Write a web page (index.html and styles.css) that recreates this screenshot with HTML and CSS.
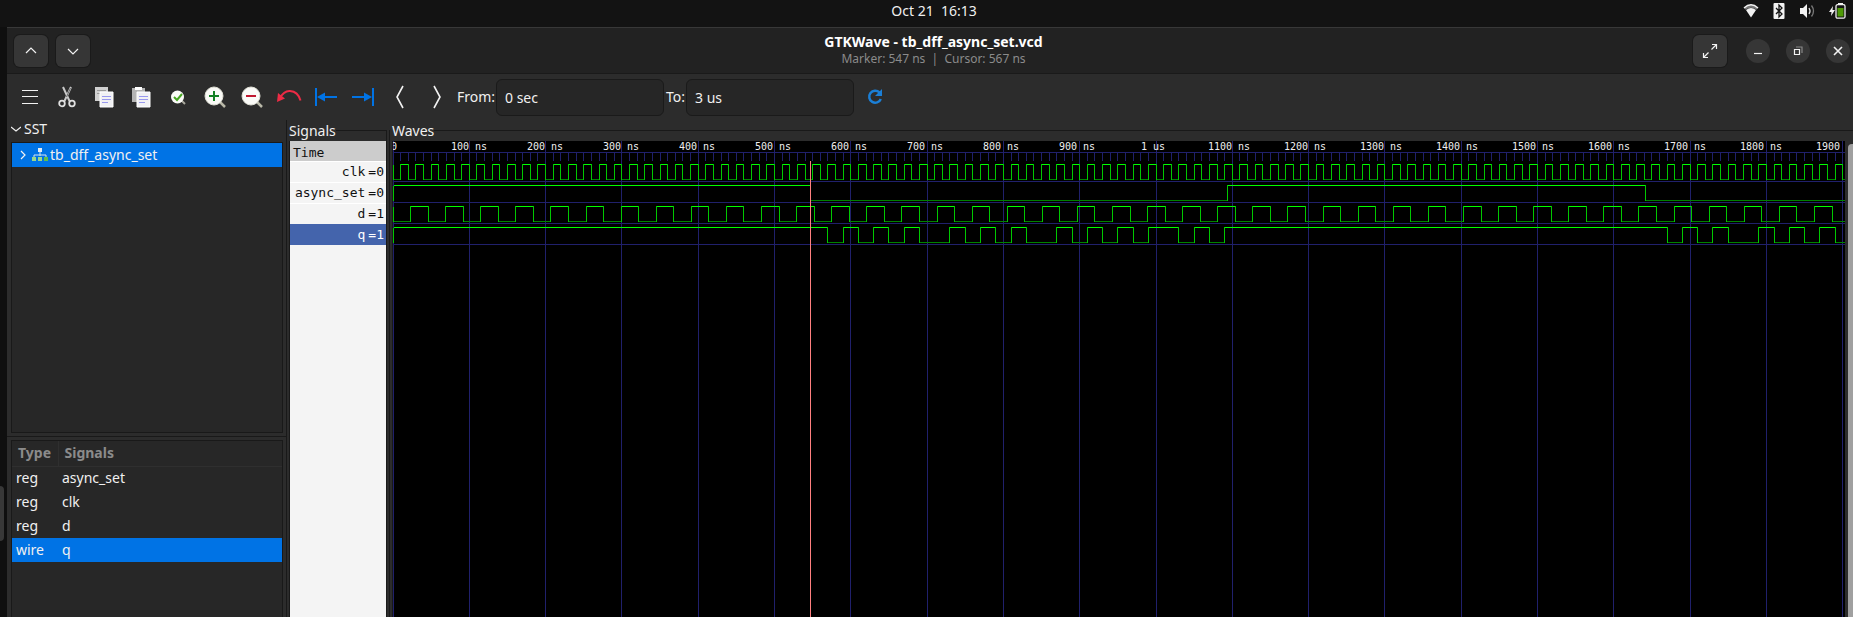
FILE: index.html
```html
<!DOCTYPE html>
<html lang="en">
<head>
<meta charset="utf-8">
<title>GTKWave - tb_dff_async_set.vcd</title>
<link rel="stylesheet" href="styles.css">
</head>
<body>
<header class="topbar">
  <time class="clock">Oct 21&nbsp; 16:13</time>
  <div class="tray">
    <svg width="16" height="16" viewBox="0 0 16 16" role="img" aria-label="Wi-Fi"><path d="M1 5Q8-1.500 15 5L13.500 6.800Q8 2.500 2.500 6.800Z" fill="#777"/><path d="M1 5Q8-1.500 15 5" fill="none" stroke="#f2f2f2" stroke-width="1.500"/><path d="M3 7Q8 3.200 13 7L8 14.500Z" fill="#f2f2f2"/></svg>
    <svg width="12" height="16" viewBox="0 0 12 16" role="img" aria-label="Bluetooth"><rect x=".5" width="11" height="16" rx="1" fill="#f2f2f2"/><path d="M3 5l6 6-3 3V2l3 3-6 6" fill="none" stroke="#131313" stroke-width="1.300"/></svg>
    <svg width="16" height="16" viewBox="0 0 16 16" role="img" aria-label="Volume"><path d="M1 5h3l4-4v14l-4-4H1z" fill="#f2f2f2"/><path d="M10 5q2 3 0 6" fill="none" stroke="#ddd" stroke-width="1.300"/><path d="M12.500 2.500q4 5.500 0 11" fill="none" stroke="#777" stroke-width="1.300"/></svg>
    <svg width="17" height="16" viewBox="0 0 17 16" role="img" aria-label="Battery charging"><path d="M4 3L0 9h2.500L2 13l4-6H3.500z" fill="#f2f2f2"/><path d="M9 0h5v2H9z" fill="#f2f2f2"/><rect x="7" y="1.700" width="9" height="13.500" rx="1.500" fill="#131313" stroke="#f2f2f2" stroke-width="1.300"/><rect x="8.500" y="5" width="6" height="8.500" fill="#4e9a06"/></svg>
  </div>
</header>

<div class="screen">
  <aside class="dock"><span class="dock-handle"></span></aside>
  <main class="window">
    <header class="titlebar">
      <div class="group">
        <button class="square" aria-label="Previous"><svg width="12" height="12" viewBox="0 0 12 12"><path d="M1 8l5-5 5 5" class="line"/></svg></button>
        <button class="square" aria-label="Next"><svg width="12" height="12" viewBox="0 0 12 12"><path d="M1 4l5 5 5-5" class="line"/></svg></button>
      </div>
      <div class="heading">
        <h1>GTKWave - tb_dff_async_set.vcd</h1>
        <p>Marker: 547 ns&nbsp; |&nbsp; Cursor: 567 ns</p>
      </div>
      <div class="group controls">
        <button class="square" aria-label="Full screen"><svg width="16" height="16" viewBox="0 0 16 16"><path d="M9.500 6.500l5-5M10 1.500h4.500V6M6.500 9.500l-5 5M6 14.500H1.500V10" class="line"/></svg></button>
        <button class="round" aria-label="Minimize"><svg width="10" height="10" viewBox="0 0 10 10"><path d="M1 7.500h8" class="line"/></svg></button>
        <button class="round" aria-label="Restore"><svg width="10" height="10" viewBox="0 0 10 10"><path d="M3 1h6v6" class="line faint"/><path d="M1.500 3.500h5v5h-5z" class="line"/></svg></button>
        <button class="round" aria-label="Close"><svg width="10" height="10" viewBox="0 0 10 10"><path d="M1 1l8 8M9 1L1 9" class="line bold"/></svg></button>
      </div>
    </header>

    <div class="toolbar">
      <button class="tool" aria-label="Menu"><svg width="22" height="22" viewBox="0 0 22 22"><path d="M3 4.500h16M3 10.500h16M3 17.500h16" class="line"/></svg></button>
      <button class="tool" aria-label="Cut"><svg width="22" height="22" viewBox="0 0 22 22"><path d="M7 1l6.500 14M15 1L8.500 15" fill="none" stroke="#c8c8c8" stroke-width="2"/><path d="M14.500 2l-4 9" stroke="#666"/><circle cx="6" cy="17.500" r="2.800" fill="none" stroke="#e0e0e0" stroke-width="1.800"/><circle cx="16" cy="17.500" r="2.800" fill="none" stroke="#e0e0e0" stroke-width="1.800"/></svg></button>
      <button class="tool" aria-label="Copy"><svg width="22" height="22" viewBox="0 0 22 22"><path d="M2 1h13v14H2z" fill="#d0d0d0"/><path d="M4 4.500h9M4 7.500h9" stroke="#999"/><path d="M7 6h13v15H7z" fill="#f1f1f4" stroke="#fff"/><path d="M9 10.500h9M9 13.500h9M9 16.500h6" stroke="#9898ee"/></svg></button>
      <button class="tool" aria-label="Paste"><svg width="22" height="22" viewBox="0 0 22 22"><path d="M2 2h13v14H2z" fill="#b4b4b4"/><path d="M5 1h7v3H5z" fill="#fff"/><path d="M7 6h13v15H7z" fill="#f1f1f4" stroke="#fff"/><path d="M9 10.500h9M9 13.500h9M9 16.500h6" stroke="#9898ee"/></svg></button>
      <button class="tool" aria-label="Zoom fit"><svg width="22" height="22" viewBox="0 0 22 22"><path d="M14 14l4 4" stroke="#aaa99e" stroke-width="2"/><circle cx="10.500" cy="11" r="6.500" fill="#fafaf7"/><path d="M7 11l3 3 5-6" fill="none" stroke="#45a520" stroke-width="2"/></svg></button>
      <button class="tool" aria-label="Zoom in"><svg width="22" height="22" viewBox="0 0 22 22"><path d="M15 15l6 6" stroke="#b9b8a8" stroke-width="2.500"/><circle cx="10" cy="10" r="9" fill="#fafaf7" stroke="#deded4"/><path d="M10 5v10M5 10h10" stroke="#128023" stroke-width="2"/></svg></button>
      <button class="tool" aria-label="Zoom out"><svg width="22" height="22" viewBox="0 0 22 22"><path d="M15 15l6 6" stroke="#b9b8a8" stroke-width="2.500"/><circle cx="10" cy="10" r="9" fill="#fafaf7" stroke="#deded4"/><path d="M5 10h10" stroke="#c01830" stroke-width="2"/></svg></button>
      <button class="tool" aria-label="Undo zoom"><svg width="26" height="22" viewBox="0 0 26 22"><path d="M4 12Q8 4.500 14 5q8 .5 10.500 9.500" fill="none" stroke="#ed2b45" stroke-width="2"/><path d="M2 7l7 5.500-8 3.500z" fill="#ed2b45"/></svg></button>
      <button class="tool" aria-label="Zoom to start"><svg width="22" height="22" viewBox="0 0 22 22"><path d="M1 2v18M8 11h14" stroke="#0073e5" stroke-width="2"/><path d="M2 11l8-4.500v9z" fill="#0073e5"/></svg></button>
      <button class="tool" aria-label="Zoom to end"><svg width="22" height="22" viewBox="0 0 22 22"><path d="M21 2v18M0 11h14" stroke="#0073e5" stroke-width="2"/><path d="M20 11l-8-4.500v9z" fill="#0073e5"/></svg></button>
      <button class="tool" aria-label="Previous edge"><svg width="22" height="24" viewBox="0 0 22 24"><path d="M14 1L8 12l6 11" class="line bold"/></svg></button>
      <button class="tool" aria-label="Next edge"><svg width="22" height="24" viewBox="0 0 22 24"><path d="M8 1l6 11-6 11" class="line bold"/></svg></button>
      <label class="field"><span class="from">From:</span><input type="text" value="0 sec"></label>
      <label class="field"><span>To:</span><input type="text" value="3 us"></label>
      <button class="tool" aria-label="Reload"><svg width="18" height="18" viewBox="0 0 18 18"><path d="M13.500 4.500A6 6 0 1 0 14.800 11" fill="none" stroke="#1b7fd6" stroke-width="2.500"/><path d="M16 1v7H9z" fill="#1b7fd6"/></svg></button>
    </div>

    <div class="panes">
      <section class="tree-pane">
        <button class="expander"><svg width="10" height="10" viewBox="0 0 10 10"><path d="M0 3l5 4 5-4" class="line"/></svg>SST</button>
        <div class="box tree">
          <button class="node">
            <svg width="6" height="10" viewBox="0 0 6 10"><path d="M1 1l4 4-4 4" class="line"/></svg>
            <svg width="16" height="14" viewBox="0 0 16 14"><path d="M8 4v4M2 9V7h12v2" fill="none" stroke="#d5e4f4"/><path d="M6 0h4v4H6z" fill="#e2ebf5"/><path d="M0 9h4v4H0zM6 9h4v4H6z" fill="#9bd78b"/><path d="M12 9h4v4h-4z" fill="#5fbd4c"/></svg>
            <span>tb_dff_async_set</span>
          </button>
        </div>
        <div class="split"></div>
        <div class="box">
          <table class="vars">
            <thead><tr><th class="type">Type</th><th>Signals</th></tr></thead>
            <tbody>
              <tr><td>reg</td><td>async_set</td></tr>
              <tr><td>reg</td><td>clk</td></tr>
              <tr><td>reg</td><td>d</td></tr>
              <tr class="selected"><td>wire</td><td>q</td></tr>
            </tbody>
          </table>
        </div>
      </section>

      <fieldset class="frame signals">
        <legend>Signals</legend>
        <ul class="names">
          <li class="head">Time</li>
          <li>clk<span>=0</span></li>
          <li>async_set<span>=0</span></li>
          <li>d<span>=1</span></li>
          <li class="active">q<span>=1</span></li>
        </ul>
      </fieldset>

      <fieldset class="frame waves">
        <legend>Waves</legend>
        <div class="wave-body">
          <svg class="canvas" id="waves" role="img" aria-label="Waveforms of clk, async_set, d and q"></svg>
          <div class="scroll"><span class="thumb"></span></div>
        </div>
      </fieldset>
    </div>
  </main>
</div>
<script src="waves.js"></script>
</body>
</html>
```
FILE: styles.css
```css
* { box-sizing: border-box; }

body {
  margin: 0;
  height: 100vh;
  display: flex;
  flex-direction: column;
  overflow: hidden;
  background: #131313;
  color: #f0f0f0;
  font: 14px/20px "Noto Sans", sans-serif;
}

button {
  display: flex;
  align-items: center;
  justify-content: center;
  padding: 0;
  border: 0;
  background: none;
  color: inherit;
  font: inherit;
}

svg { display: block; flex: none; }

.line { fill: none; stroke: #f2f2f2; stroke-width: 1.2; }
.line.bold { stroke-width: 1.6; }
.line.faint { stroke: #888; }

.topbar {
  display: grid;
  grid-template-columns: 1fr auto 1fr;
  align-items: center;
  height: 27px;
  padding: 0 7px 6px 22px;
  flex: none;
}
.clock { grid-column: 2; }
.tray { display: flex; justify-content: flex-end; gap: 14px; }

.screen { display: flex; flex: 1; min-height: 0; }

.dock { width: 7px; display: flex; align-items: flex-end; padding-bottom: 76px; background: #0f0f0f; }
.dock-handle { width: 4px; height: 55px; border-radius: 0 4px 4px 0; background: #383838; }

.window { flex: 1; min-width: 0; display: flex; flex-direction: column; background: #2c2c2c; }

.titlebar {
  display: grid;
  grid-template-columns: 1fr auto 1fr;
  align-items: center;
  height: 47px;
  flex: none;
  padding: 0 0 0 7px;
  background: #222;
  border-top: 1px solid #383838;
  border-bottom: 1px solid #1a1a1a;
}
.group { display: flex; align-items: center; gap: 8px; }
.controls { justify-content: flex-end; gap: 16px; padding-right: 3px; }
.controls .square { margin-right: 3px; }
.square { width: 34px; height: 32px; border-radius: 6px; background: #363636; box-shadow: 0 0 0 1px #1a1a1a; }
.round { width: 24px; height: 24px; border-radius: 50%; background: #363636; }
.heading { padding-bottom: 1px; text-align: center; }
.heading h1 { margin: 0; font-size: 14px; line-height: 16px; color: #fff; }
.heading p { margin: 0; font-size: 12px; line-height: 17px; color: #8b8b8b; }

.toolbar { display: flex; align-items: center; height: 46px; flex: none; padding-left: 4px; }
.tool { width: 37px; height: 36px; }
.field { display: flex; align-items: center; }
.field span { width: 20px; }
.field .from { width: 41px; padding-left: 2px; }
.field input {
  width: 168px;
  height: 37px;
  margin-right: 2px;
  padding: 0 8px;
  border: 1px solid #1a1a1a;
  border-radius: 6px;
  background: #262626;
  color: inherit;
  font: inherit;
}

.panes { display: flex; flex: 1; min-height: 0; }

.tree-pane { width: 280px; flex: none; display: flex; flex-direction: column; border-right: 1px solid #191919; }
.expander { justify-content: flex-start; gap: 3px; height: 18px; margin: 0 0 4px 4px; }
.box { margin: 0 3px 0 4px; border: 1px solid #191919; background: #272727; }
.box:last-child { flex: 1; border-bottom: 0; }
.tree { height: 291px; flex: none; }
.node { width: 100%; height: 24px; justify-content: flex-start; gap: 6px; padding-left: 8px; background: #0073e5; }
.node span { margin-left: -4px; }
.split { height: 1px; margin: 3px 0; background: #191919; flex: none; }

.vars { width: 100%; border-collapse: collapse; }
.vars th, .vars td { height: 24px; padding: 0 4px; text-align: left; }
.vars th { height: 25px; padding: 0 6px; color: #8b8b8b; border-bottom: 1px solid #2f2f2f; }
.vars .type { width: 46px; border-right: 1px solid #2f2f2f; }
.vars .selected { background: #0073e5; }

.frame { position: relative; margin: 0; padding: 0; border: 1px solid #191919; border-bottom: 0; display: flex; flex-direction: column; min-width: 0; }
.frame legend { padding: 0; margin-left: -1px; line-height: 21px; }
.signals { width: 98px; flex: none; margin: 0 2px; }
.waves { flex: 1; margin: 0 0 0 3px; border-right: 0; }
.waves::before {
  content: "";
  position: absolute;
  left: -4px;
  top: -11px;
  bottom: 0;
  width: 1px;
  background: #191919;
}

.names {
  flex: 1;
  min-height: 476px;
  margin: 0;
  padding: 0;
  list-style: none;
  background: #f4f4f4;
  color: #111;
  font: 13px/20px "DejaVu Sans Mono", monospace;
  text-align: right;
}
.names li { height: 21px; padding: 0 2px; border-top: 1px solid #fff; }
.names span { margin-left: 3px; }
.names .head { height: 20px; line-height: 24px; border: 0; background: #ccc; text-align: left; padding-left: 3px; }
.names .active { background: #4464ac; border-color: #4464ac; color: #fff; }

.wave-body { display: flex; flex: 1; min-height: 476px; }
.canvas { flex: 1; min-width: 0; background: #000; shape-rendering: crispEdges; }
.canvas path { fill: none; stroke-width: 1; }
.canvas text { fill: #f0f0f0; font: 10px "DejaVu Sans Mono", monospace; text-anchor: middle; }
.grid { stroke: #20206c; }
.high { stroke: #00ff00; }
.edge { stroke: #00c800; }
.low { stroke: #008200; }
.marker { stroke: #ff8080; }
.scroll { width: 8px; flex: none; padding: 3px 0 0 3px; background: #2c2c2c; }
.thumb { display: block; height: 100%; border-radius: 4px 0 0 0; background: #a0a0a0; }
```
FILE: waves.js
```js
const END = 3000;
const SCALE = 0.763;
const LABEL_SCALE = 0.76;
const MARKER = 547;
const svg = document.getElementById("waves");
const width = svg.getBoundingClientRect().width;

function add(tag, attrs, text) {
  const el = document.createElementNS("http://www.w3.org/2000/svg", tag);
  for (const key in attrs) el.setAttribute(key, attrs[key]);
  if (text) el.textContent = text;
  svg.appendChild(el);
}

const col = (t) => Math.floor(t * SCALE) + 0.5;

let grid = "M0 11.5H3000";
for (let t = 0; t <= END; t += 10) {
  grid += t % 100 ? `M${col(t)} 11V20` : `M${col(t)} 0V3000`;
}
for (let row = 0; row < 4; row++) grid += `M0 ${40.5 + row * 21}H3000`;
add("path", { class: "grid", d: grid });

for (let t = 0; t <= END && t * LABEL_SCALE < width; t += 100) {
  const label = t === 0 ? "0" : t % 1000 ? `${t} ns` : `${t / 1000} us`;
  add("text", { x: Math.round(t * LABEL_SCALE) + (t ? 0 : 1), y: 9 }, label);
}

const clk = (t) => Math.floor(t / 10) % 2;
const set = (t) => (Math.floor(t / MARKER) + 1) % 2;
const d = (t) => Math.floor(t / 23) % 2;

let held = 1;
const q = (t) => {
  if (set(t)) held = 1;
  else if (t % 20 === 10) held = d(t);
  return held;
};

[clk, set, d, q].forEach((signal, row) => {
  const top = 23.5 + row * 21;
  const bottom = top + 15;
  const paths = { low: "", high: "", edge: `M0.5 ${top}V${bottom}` };
  let value = signal(0);
  let start = 0;
  for (let t = 1; t <= END; t++) {
    const next = signal(t);
    if (next === value && t < END) continue;
    paths[value ? "high" : "low"] += `M${col(start)} ${value ? top : bottom}H${col(t)}`;
    paths.edge += `M${col(t)} ${top - 0.5}V${bottom + 0.5}`;
    start = t;
    value = next;
  }
  for (const name in paths) add("path", { class: name, d: paths[name] });
});

add("path", { class: "marker", d: `M${col(MARKER)} 20V3000` });
```
